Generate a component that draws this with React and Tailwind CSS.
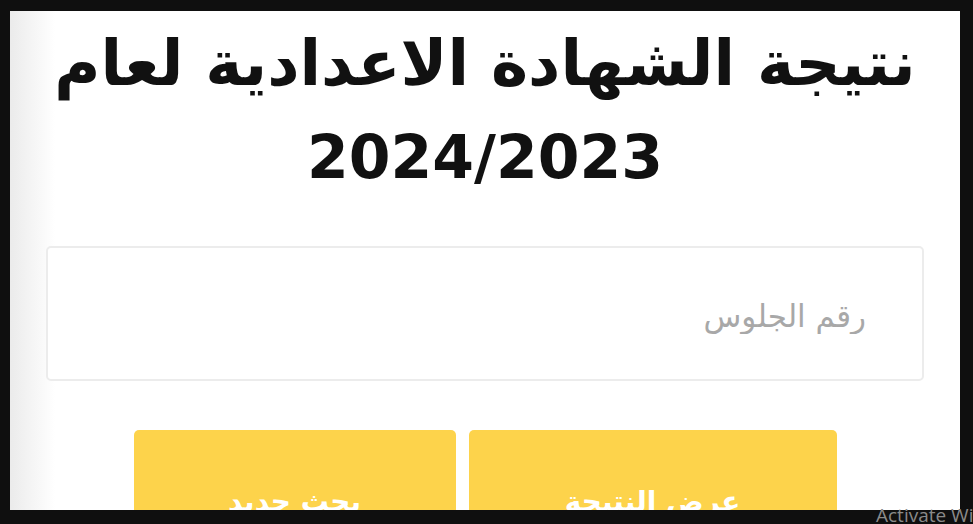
import React from 'react';

const App = () => {
    return (
        <div className="relative w-full h-[524px] overflow-hidden bg-[#0f0f0f] pt-[11px] pl-[10px] pr-[13px] pb-[14px]">
            <div
                dir="rtl"
                className="h-full overflow-hidden bg-[linear-gradient(to_right,#ebebeb,#ffffff_45px)] font-['DejaVu_Sans',sans-serif]"
            >
                <h1 className="pt-[6px] text-center text-[63px] leading-[93px] font-bold text-[#111]">
                    نتيجة الشهادة الاعدادية لعام
                    <br />
                    <span className="text-[60px]">2024/2023</span>
                </h1>

                <div className="mt-[42px] mx-[36px]">
                    <input
                        type="text"
                        placeholder="رقم الجلوس"
                        className="w-full h-[135px] rounded-[5px] border-2 border-[#ececec] bg-white pr-[56px] pt-[4px] text-[31px] text-[#333] placeholder:text-[#a8a8a8] outline-none"
                    />
                </div>

                <div className="mt-[49px] flex justify-center gap-[13px]">
                    <button className="w-[368px] h-[110px] rounded-[5px] bg-[#fdd34b] pt-[34px] text-[28px] font-bold text-white">
                        عرض النتيجة
                    </button>
                    <button className="w-[322px] h-[110px] rounded-[5px] bg-[#fdd34b] pt-[34px] text-[28px] font-bold text-white">
                        بحث جديد
                    </button>
                </div>
            </div>

            <span className="absolute left-[876px] top-[501px] whitespace-nowrap text-[19px] text-[#8a8a8a] font-['Open_Sans',sans-serif]">
                Activate Windows
            </span>
        </div>
    );
};

export default App;
